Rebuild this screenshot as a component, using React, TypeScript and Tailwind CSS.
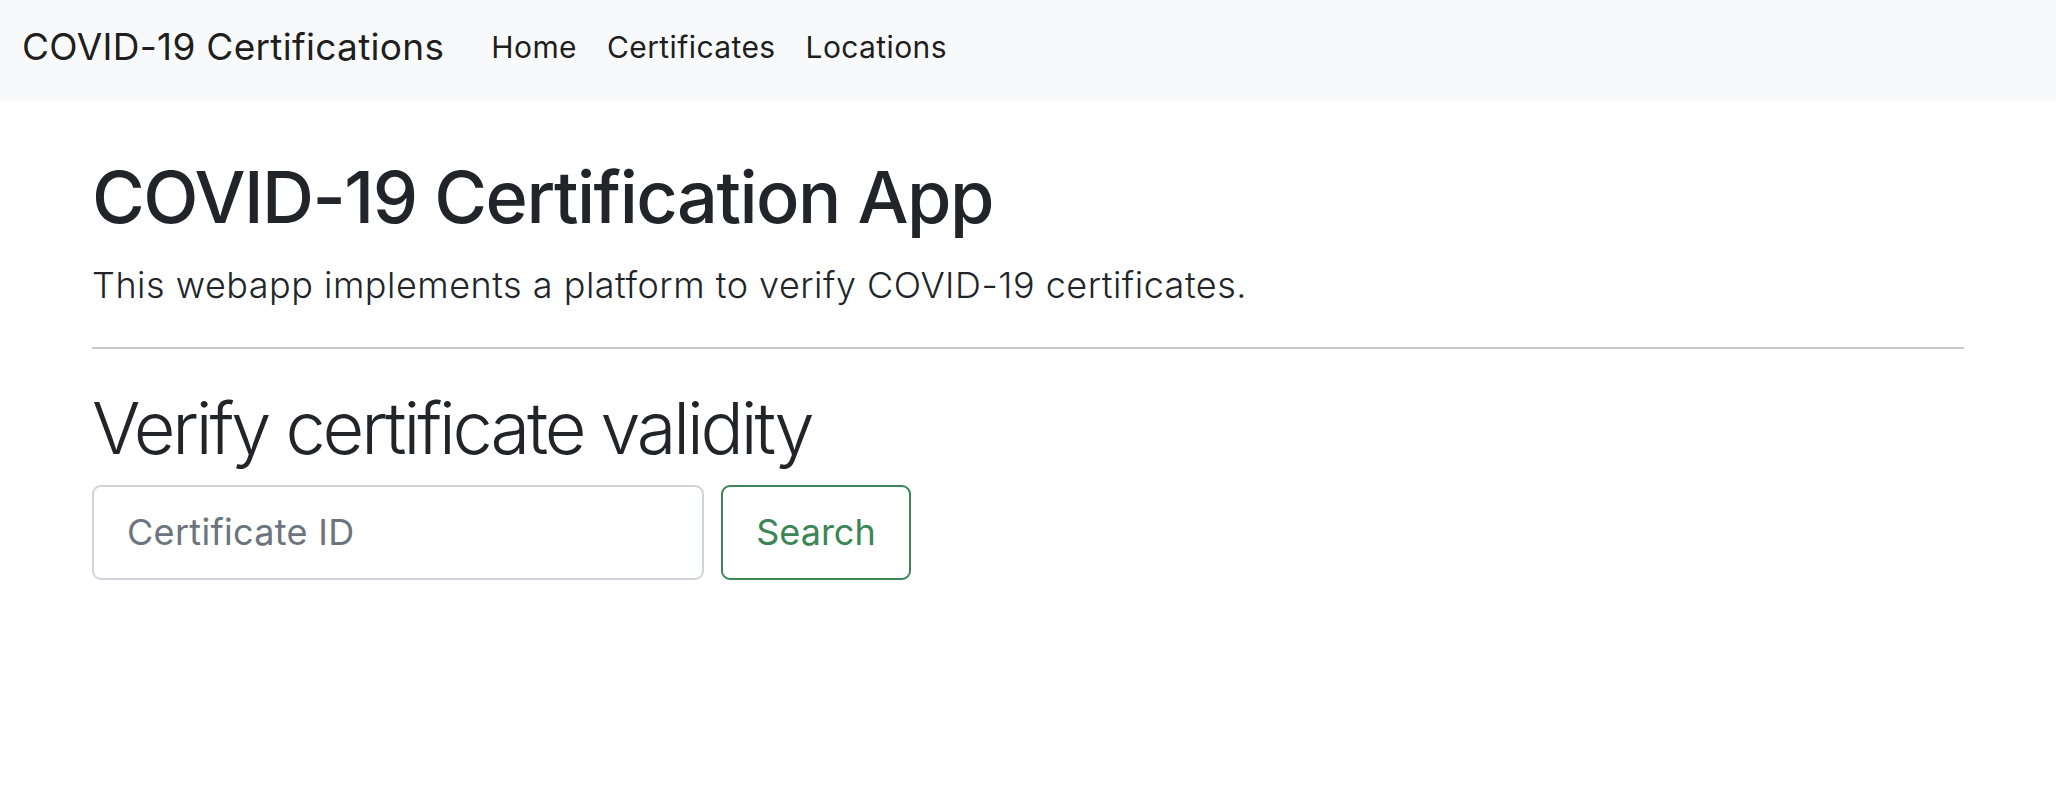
import React from 'react';

export default function App() {
  return (
    <div className="min-h-screen bg-white text-[#212529] font-['Inter','Liberation_Sans',sans-serif]">
      {/* Navbar */}
      <nav className="h-[101px] bg-[#f8f9fa] flex items-center px-[22px] pb-[8px]">
        <a href="#" className="text-[37px] leading-none text-black/90 mr-[32px] tracking-[0.3px]">
          COVID-19 Certifications
        </a>
        <div className="flex items-center">
          <a href="#" className="px-[15px] text-[30px] leading-none text-black/90 tracking-[0.4px]">Home</a>
          <a href="#" className="px-[15px] text-[30px] leading-none text-black/90 tracking-[0.4px]">Certificates</a>
          <a href="#" className="px-[15px] text-[30px] leading-none text-black/90 tracking-[0.4px]">Locations</a>
        </div>
      </nav>

      {/* Content */}
      <main className="px-[92px]">
        <h1 className="mt-[53px] text-[72px] leading-[1.2] font-medium tracking-[-1.5px]">
          COVID-19 Certification App
        </h1>
        <p className="mt-[18px] text-[36px] leading-[1.5] font-light tracking-[0.5px]">
          This webapp implements a platform to verify COVID-19 certificates.
        </p>
        <hr className="mt-[35px] border-0 h-[2px] bg-[#c8c9ca]" />
        <h2 className="mt-[36px] text-[72px] leading-[1.2] font-light tracking-[-3.1px]">
          Verify certificate validity
        </h2>
        <form className="mt-[13px] flex gap-[17px]" onSubmit={(e) => e.preventDefault()}>
          <input
            type="text"
            placeholder="Certificate ID"
            className="w-[612px] h-[95px] px-[33px] text-[36px] border-2 border-[#ced4da] rounded-[9px] outline-none placeholder:text-[#6c757d] tracking-[0.3px]"
          />
          <button
            type="submit"
            className="w-[190px] h-[95px] text-[36px] text-[#3b8556] border-2 border-[#3b8556] rounded-[9px] bg-white"
          >
            Search
          </button>
        </form>
      </main>
    </div>
  );
}
